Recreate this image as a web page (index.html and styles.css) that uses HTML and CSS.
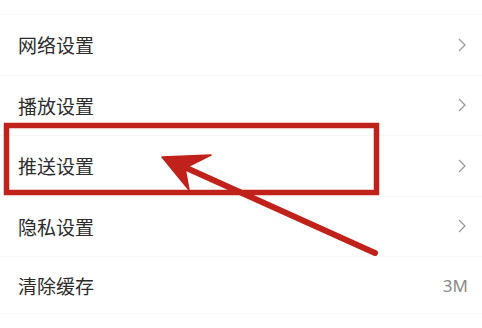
FILE: index.html
```html
<!DOCTYPE html>
<html lang="zh-CN">
<head>
<meta charset="utf-8">
<title>设置</title>
<link rel="stylesheet" href="styles.css">
</head>
<body>
<div class="page">
  <ul class="list">
    <li class="row"><span class="label">网络设置</span><svg class="chev" width="8" height="14" viewBox="0 0 8 14"><polyline points="1,1 7,7 1,13" /></svg></li>
    <li class="row"><span class="label">播放设置</span><svg class="chev" width="8" height="14" viewBox="0 0 8 14"><polyline points="1,1 7,7 1,13" /></svg></li>
    <li class="row"><span class="label">推送设置</span><svg class="chev" width="8" height="14" viewBox="0 0 8 14"><polyline points="1,1 7,7 1,13" /></svg></li>
    <li class="row"><span class="label">隐私设置</span><svg class="chev" width="8" height="14" viewBox="0 0 8 14"><polyline points="1,1 7,7 1,13" /></svg></li>
    <li class="row row-last"><span class="label">清除缓存</span><span class="value">3M</span></li>
  </ul>
  <svg class="annot" width="482" height="328" viewBox="0 0 482 328">
    <rect x="6.5" y="125.5" width="370" height="67" fill="none" stroke="#c0221b" stroke-width="5.5"/>
    <line x1="182" y1="166" x2="375" y2="253" stroke="#c0221b" stroke-width="6" stroke-linecap="round"/>
    <polygon points="162,157 211,155 185,168 189,190" fill="#c0221b" stroke="#c0221b" stroke-width="1.5" stroke-linejoin="round"/>
  </svg>
</div>
</body>
</html>
```
FILE: styles.css
```css
html, body {
  margin: 0;
  padding: 0;
  background: #ffffff;
}
.page {
  position: relative;
  width: 482px;
  height: 328px;
  overflow: hidden;
  font-family: "Noto Sans CJK SC", "Noto Sans", sans-serif;
}
.list {
  list-style: none;
  margin: 14px 0 0 0;
  padding: 0;
  border-top: 1px solid #f7f7f7;
}
.row {
  box-sizing: border-box;
  height: 60.5px;
  display: flex;
  align-items: center;
  justify-content: space-between;
  padding: 0 16px 0 18px;
  border-bottom: 1px solid #f7f7f7;
}
.row-last {
  height: 57px;
  padding-right: 14px;
}
.label {
  font-size: 19px;
  color: #2b2b2b;
  line-height: 1;
}
.chev polyline {
  fill: none;
  stroke: #9a9a9a;
  stroke-width: 1.3;
}
.value {
  font-family: "Noto Sans", "Liberation Sans", sans-serif;
  font-size: 17px;
  color: #8a8a8a;
  line-height: 1;
}
.annot {
  position: absolute;
  left: 0;
  top: 0;
  pointer-events: none;
}
```
